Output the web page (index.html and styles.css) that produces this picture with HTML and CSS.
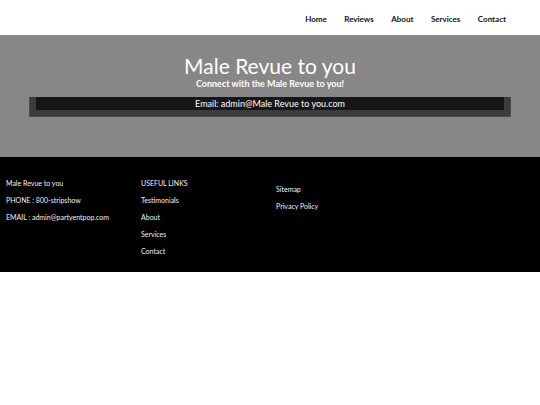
FILE: index.html
```html
<!DOCTYPE html>
<html lang="en">
<head>
    <meta charset="UTF-8">
    <meta name="viewport" content="width=device-width, initial-scale=1.0">
    <title>Male Revue to you</title>
    <link rel="stylesheet" href="styles.css">
</head>
<body>
    <header class="site-header">
        <nav class="main-nav">
            <a href="#">Home</a>
            <a href="#">Reviews</a>
            <a href="#">About</a>
            <a href="#">Services</a>
            <a href="#">Contact</a>
        </nav>
    </header>

    <section class="hero">
        <h1>Male Revue to you</h1>
        <p class="tagline">Connect with the Male Revue to you!</p>
        <div class="email-box">
            <div class="email-bar">Email: admin@Male Revue to you.com</div>
        </div>
    </section>

    <footer class="site-footer">
        <div class="footer-col">
            <p>Male Revue to you</p>
            <p>PHONE : 800-stripshow</p>
            <p>EMAIL : admin@partyentpop.com</p>
        </div>
        <div class="footer-col">
            <p>USEFUL LINKS</p>
            <a href="#">Testimonials</a>
            <a href="#">About</a>
            <a href="#">Services</a>
            <a href="#">Contact</a>
        </div>
        <div class="footer-col offset">
            <a href="#">Sitemap</a>
            <a href="#">Privacy Policy</a>
        </div>
    </footer>
</body>
</html>
```

FILE: styles.css
```css
body {
    font-family: Lato, "Open Sans", sans-serif;
    margin: 0;
    background-color: #fff;
}
a {
    color: inherit;
    text-decoration: none;
}
.site-header {
    height: 35px;
    display: flex;
    justify-content: flex-end;
    align-items: center;
    padding: 2px 34px 0 0;
    box-sizing: border-box;
}
.main-nav {
    display: flex;
    gap: 17.5px;
}
.main-nav a {
    color: #111;
    font-size: 8px;
    font-weight: bold;
}
.hero {
    background-color: #878787;
    height: 122px;
    padding-top: 19px;
    box-sizing: border-box;
    text-align: center;
    color: #fff;
}
.hero h1 {
    margin: 0;
    font-size: 21px;
    font-weight: normal;
    line-height: 24px;
}
.tagline {
    margin: 0;
    font-size: 9px;
    font-weight: bold;
    line-height: 11px;
}
.email-box {
    margin: 8px 29px 0 29px;
    height: 20px;
    background-color: #3c3c3c;
    border: 1px solid #4a4a4a;
    border-top: none;
    box-sizing: border-box;
    padding: 0 6px;
}
.email-bar {
    background-color: #161616;
    height: 13px;
    font-size: 9px;
    line-height: 14px;
}
.site-footer {
    background-color: #000;
    color: #f2f2f2;
    height: 115px;
    display: flex;
    padding: 22px 0 0 6px;
    box-sizing: border-box;
}
.footer-col {
    width: 135px;
    display: flex;
    flex-direction: column;
    gap: 8px;
    font-size: 7px;
}
.footer-col p {
    margin: 0;
}
.footer-col.offset {
    padding-top: 6px;
}
.footer-col p,
.footer-col a {
    line-height: 9px;
}
```
